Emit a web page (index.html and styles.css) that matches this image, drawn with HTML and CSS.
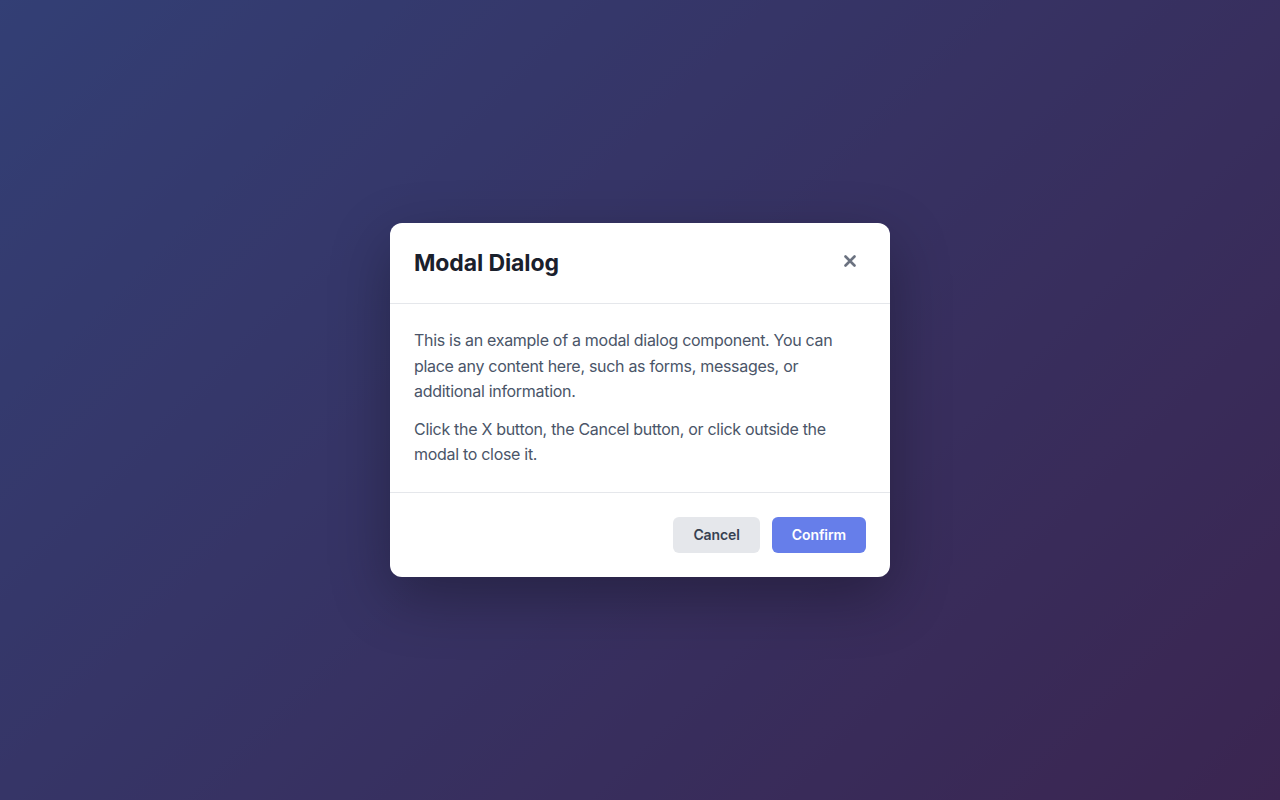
FILE: index.html
```html
<!DOCTYPE html>
<html lang="en">
<head>
<meta charset="utf-8">
<title>Modal Dialog</title>
<link rel="stylesheet" href="styles.css">
</head>
<body>
<div class="overlay">
  <div class="modal" role="dialog" aria-labelledby="modal-title">
    <div class="modal-header">
      <h2 id="modal-title" class="modal-title">Modal Dialog</h2>
      <button class="close-btn" aria-label="Close">
        <svg width="12" height="12" viewBox="0 0 12 12" aria-hidden="true"><path d="M1.5 1.5L10.5 10.5M10.5 1.5L1.5 10.5" stroke="currentColor" stroke-width="2.6" stroke-linecap="round"/></svg>
      </button>
    </div>
    <div class="modal-body">
      <p>This is an example of a modal dialog component. You can place any content here, such as forms, messages, or additional information.</p>
      <p>Click the X button, the Cancel button, or click outside the modal to close it.</p>
    </div>
    <div class="modal-footer">
      <button class="btn btn-secondary">Cancel</button>
      <button class="btn btn-primary">Confirm</button>
    </div>
  </div>
</div>
</body>
</html>
```
FILE: styles.css
```css
* { box-sizing: border-box; }
html, body { margin: 0; height: 100%; }
body {
  font-family: Inter, "Noto Sans", "Liberation Sans", sans-serif;
  background: linear-gradient(135deg, #667eea 0%, #764ba2 100%);
}
.overlay {
  height: 100%;
  background: rgba(0, 0, 0, 0.5);
  display: flex;
  align-items: center;
  justify-content: center;
}
.modal {
  width: 500px;
  background: #fff;
  border-radius: 12px;
  box-shadow: 0 20px 60px rgba(0, 0, 0, 0.3);
  overflow: hidden;
}
.modal-header {
  display: flex;
  align-items: center;
  justify-content: space-between;
  padding: 24px;
  border-bottom: 1px solid #e5e7eb;
}
.modal-title {
  margin: 0;
  font-size: 23px;
  font-weight: 700;
  color: #1a202c;
  line-height: 32px;
  letter-spacing: -0.1px;
}
.close-btn {
  border: none;
  background: none;
  padding: 0;
  width: 32px;
  height: 32px;
  margin-top: -4px;
  color: #6b7280;
  display: flex;
  align-items: center;
  justify-content: center;
  cursor: pointer;
}
.modal-body {
  padding: 24px;
  border-bottom: 1px solid #e5e7eb;
}
.modal-body p {
  margin: 0 0 12px;
  font-size: 16px;
  line-height: 1.6;
  color: #4a5568;
  letter-spacing: -0.3px;
}
.modal-body p:last-child { margin-bottom: 0; }
.modal-footer {
  display: flex;
  justify-content: flex-end;
  gap: 12px;
  padding: 24px;
}
.btn {
  border: none;
  border-radius: 6px;
  padding: 8px 20px;
  font-family: inherit;
  font-size: 14px;
  font-weight: 600;
  line-height: 20px;
  letter-spacing: -0.1px;
  cursor: pointer;
}
.btn-secondary { background: #e5e7eb; color: #374151; }
.btn-primary { background: #667eea; color: #fff; }
```
